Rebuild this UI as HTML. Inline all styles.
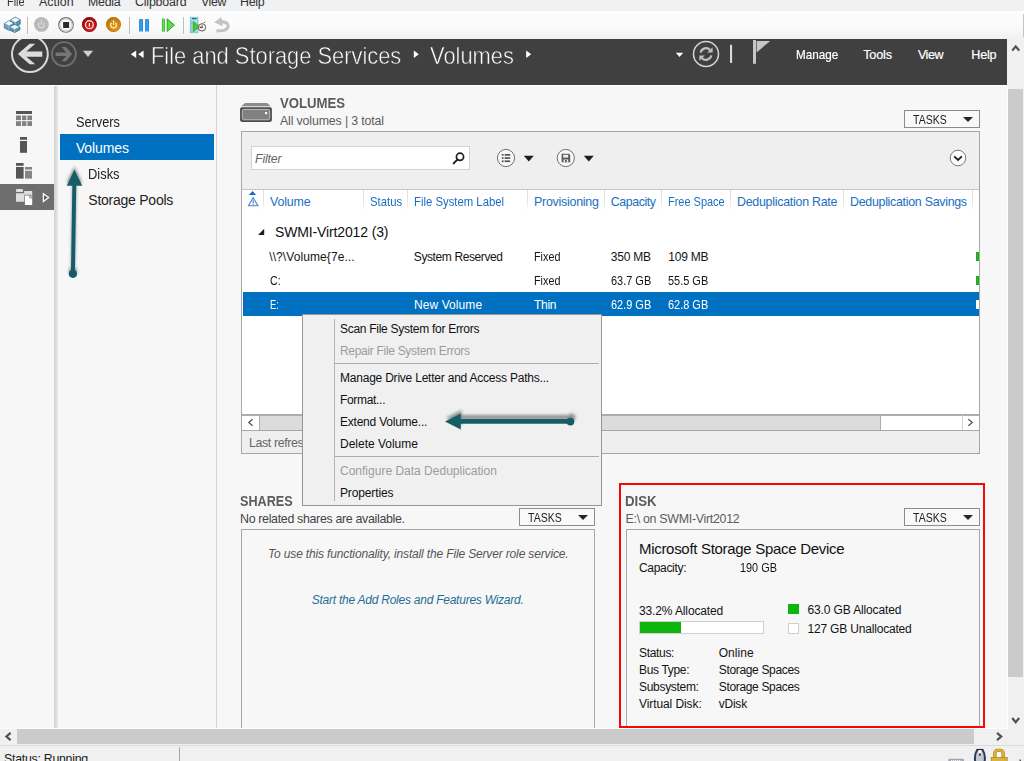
<!DOCTYPE html>
<html lang="en">
<head>
<meta charset="utf-8">
<title>Server Manager - File and Storage Services - Volumes</title>
<style>
*{box-sizing:border-box;margin:0;padding:0}
html,body{width:1024px;height:761px;overflow:hidden;background:#f7f7f7}
body{position:relative;font-family:"Liberation Sans",sans-serif;font-size:12px;color:#1a1a1a}
.a{position:absolute}
.t{position:absolute;white-space:nowrap;line-height:16px;height:16px;z-index:2}
svg{position:absolute;left:0;top:0;overflow:visible}
.tasks{border:1px solid #8c8c8c;background:#f9f9f9;height:18px;width:76px}
.tasks i{position:absolute;left:58px;top:6px;border:5px solid transparent;border-top:5px solid #262626;border-bottom:0;width:0;height:0}
.box{border:1px solid #a6a6a6}
.cs{position:absolute;top:190px;width:1px;height:21px;background:linear-gradient(#dcdcdc,#e8e8e8 60%,#fff)}
</style>
</head>
<body>
<!-- window chrome: menu, toolbar -->
<div class="a" style="left:0;top:0;width:1024px;height:11px;background:#f0f1f3"></div>
<div class="a" style="left:0;top:11px;width:1024px;height:28px;background:linear-gradient(#fdfdfd,#fafafa 60%,#f1f1f1)"></div>
<div class="a" style="left:1023px;top:14px;width:1px;height:23px;background:#c4c4c4"></div>
<!-- server manager header -->
<div class="a" style="left:0;top:39px;width:1007px;height:46px;background:#404040"></div>

<div class="a" style="left:0;top:85px;width:1007px;height:1px;background:#fdfdfd"></div>
<!-- left icon strip + nav -->
<div class="a" style="left:0;top:184px;width:54px;height:26px;background:#6e6e6e"></div>
<div class="a" style="left:54px;top:86px;width:4px;height:642px;background:linear-gradient(90deg,#d0d0d0,#dcdcdc 50%,#e8e8e8)"></div>
<div class="a" style="left:216px;top:85px;width:1px;height:644px;background:#d4d4d4"></div>
<div class="a" style="left:60px;top:134px;width:154px;height:26px;background:#0071c0"></div>

<!-- VOLUMES tile -->
<div class="a tasks" style="left:904px;top:110px"><i></i></div>
<div class="a box" style="left:241px;top:131px;width:739px;height:323px;background:#fff"></div>
<div class="a" style="left:242px;top:132px;width:737px;height:57px;background:#efefef"></div>
<div class="a" style="left:242px;top:189px;width:737px;height:1px;background:#c6c6c6"></div>
<div class="a" style="left:251px;top:146px;width:219px;height:24px;background:#fff;border:1px solid #d2d2d2"></div>
<div class="cs" style="left:263px"></div><div class="cs" style="left:363px"></div><div class="cs" style="left:407px"></div>
<div class="cs" style="left:527px"></div><div class="cs" style="left:604px"></div><div class="cs" style="left:661px"></div>
<div class="cs" style="left:730px"></div><div class="cs" style="left:843px"></div><div class="cs" style="left:972px"></div>
<!-- selected row -->
<div class="a" style="left:243px;top:292px;width:736px;height:24px;background:#0071c0"></div>
<div class="a" style="left:976px;top:252px;width:3px;height:9px;background:#22b022"></div>
<div class="a" style="left:976px;top:276px;width:3px;height:9px;background:#22b022"></div>
<div class="a" style="left:976px;top:300px;width:3px;height:9px;background:#fff"></div>
<!-- inner h-scrollbar + footer -->
<div class="a" style="left:242px;top:414px;width:737px;height:17px;background:#fff;border-top:2px solid #adadad;border-bottom:1px solid #a6a6a6"></div>
<div class="a" style="left:259px;top:416px;width:622px;height:14px;background:#dcdcdc;border-left:1px solid #ababab;border-right:1px solid #ababab"></div>
<div class="a" style="left:962px;top:415px;width:1px;height:15px;background:#d0d0d0"></div>
<div class="a" style="left:242px;top:431px;width:737px;height:22px;background:#efefef"></div>

<!-- SHARES tile -->
<div class="a tasks" style="left:519px;top:508px"><i></i></div>
<div class="a box" style="left:241px;top:529px;width:354px;height:200px;border-bottom:0"></div>

<!-- DISK tile -->
<div class="a tasks" style="left:904px;top:508px"><i></i></div>
<div class="a box" style="left:626px;top:529px;width:354px;height:198px;border-bottom:0"></div>
<div class="a" style="left:639px;top:621px;width:125px;height:13px;background:#fff;border:1px solid #d0d0d0"></div>
<div class="a" style="left:640px;top:622px;width:41px;height:11px;background:#0db50d"></div>
<div class="a" style="left:788px;top:604px;width:11px;height:10px;background:#0db50d"></div>
<div class="a" style="left:788px;top:623px;width:11px;height:11px;background:#fff;border:1px solid #cfcfcf"></div>
<div class="a" style="left:619px;top:483px;width:366px;height:245px;border:2px solid #f40808"></div>

<!-- context menu -->
<div class="a" style="left:302px;top:314px;width:300px;height:192px;background:#f0f0f0;border:1px solid #979797;z-index:4"></div>
<div class="a" style="left:334px;top:319px;width:1px;height:182px;background:#b4b4b4;z-index:4"></div>
<div class="a" style="left:335px;top:363px;width:264px;height:1px;background:#aaa;z-index:4"></div>
<div class="a" style="left:335px;top:456px;width:264px;height:1px;background:#aaa;z-index:4"></div>

<span class="t" style="left:151.10px;top:48.28px;font-size:24px;transform:scaleX(0.9108);transform-origin:0 0;color:#fff;-webkit-text-stroke:0.55px #404040;">File and Storage Services</span>
<span class="t" style="left:430.00px;top:48.28px;font-size:24px;transform:scaleX(0.9113);transform-origin:0 0;color:#fff;-webkit-text-stroke:0.55px #404040;">Volumes</span>
<span class="t" style="left:796.40px;top:46.63px;font-size:12.6px;transform:scaleX(0.9294);transform-origin:0 0;color:#fff;-webkit-text-stroke:0.2px #fff;">Manage</span>
<span class="t" style="left:863.20px;top:46.63px;font-size:12.6px;letter-spacing:-0.141px;color:#fff;-webkit-text-stroke:0.2px #fff;">Tools</span>
<span class="t" style="left:917.90px;top:46.63px;font-size:12.6px;letter-spacing:-0.445px;color:#fff;-webkit-text-stroke:0.2px #fff;">View</span>
<span class="t" style="left:971.30px;top:46.63px;font-size:12.6px;letter-spacing:-0.252px;color:#fff;-webkit-text-stroke:0.2px #fff;">Help</span>
<span class="t" style="left:75.90px;top:114.15px;font-size:14px;transform:scaleX(0.9122);transform-origin:0 0;color:#222;">Servers</span>
<span class="t" style="left:75.90px;top:140.15px;font-size:14px;letter-spacing:-0.086px;color:#fff;">Volumes</span>
<span class="t" style="left:88.30px;top:166.15px;font-size:14px;transform:scaleX(0.9230);transform-origin:0 0;color:#222;">Disks</span>
<span class="t" style="left:88.30px;top:192.15px;font-size:14px;letter-spacing:-0.243px;color:#222;">Storage Pools</span>
<span class="t" style="left:280.00px;top:95.45px;font-size:14px;transform:scaleX(0.9410);transform-origin:0 0;font-weight:bold;color:#5b5b5b;">VOLUMES</span>
<span class="t" style="left:280.00px;top:112.70px;font-size:12.4px;letter-spacing:-0.158px;color:#5c5c5c;">All volumes | 3 total</span>
<span class="t" style="left:912.75px;top:111.77px;font-size:12.2px;transform:scaleX(0.8614);transform-origin:0 0;color:#222;">TASKS</span>
<span class="t" style="left:255.00px;top:150.70px;font-size:12.4px;letter-spacing:-0.191px;font-style:italic;color:#666;">Filter</span>
<span class="t" style="left:270.00px;top:193.95px;font-size:12.4px;letter-spacing:-0.155px;color:#1b6ec2;">Volume</span>
<span class="t" style="left:370.00px;top:193.95px;font-size:12.4px;transform:scaleX(0.9149);transform-origin:0 0;color:#1b6ec2;">Status</span>
<span class="t" style="left:414.00px;top:193.95px;font-size:12.4px;transform:scaleX(0.9149);transform-origin:0 0;color:#1b6ec2;">File System Label</span>
<span class="t" style="left:534.00px;top:193.95px;font-size:12.4px;letter-spacing:-0.237px;color:#1b6ec2;">Provisioning</span>
<span class="t" style="left:610.75px;top:193.95px;font-size:12.4px;letter-spacing:-0.415px;color:#1b6ec2;">Capacity</span>
<span class="t" style="left:668.25px;top:193.95px;font-size:12.4px;transform:scaleX(0.8843);transform-origin:0 0;color:#1b6ec2;">Free Space</span>
<span class="t" style="left:737.00px;top:193.95px;font-size:12.4px;letter-spacing:-0.250px;color:#1b6ec2;">Deduplication Rate</span>
<span class="t" style="left:850.00px;top:193.95px;font-size:12.4px;letter-spacing:-0.277px;color:#1b6ec2;">Deduplication Savings</span>
<span class="t" style="left:275.00px;top:224.15px;font-size:14px;letter-spacing:-0.134px;color:#111;">SWMI-Virt2012 (3)</span>
<span class="t" style="left:269.25px;top:248.84px;font-size:12px;letter-spacing:0.084px;color:#141414;">\\?\Volume{7e...</span>
<span class="t" style="left:413.80px;top:248.84px;font-size:12px;letter-spacing:-0.394px;color:#141414;">System Reserved</span>
<span class="t" style="left:534.00px;top:248.84px;font-size:12px;transform:scaleX(0.8997);transform-origin:0 0;color:#141414;">Fixed</span>
<span class="t" style="left:610.70px;top:248.84px;font-size:12px;letter-spacing:-0.193px;color:#141414;">350 MB</span>
<span class="t" style="left:668.20px;top:248.84px;font-size:12px;letter-spacing:-0.193px;color:#141414;">109 MB</span>
<span class="t" style="left:269.80px;top:272.84px;font-size:12px;transform:scaleX(0.8833);transform-origin:0 0;color:#141414;">C:</span>
<span class="t" style="left:534.00px;top:272.84px;font-size:12px;transform:scaleX(0.8997);transform-origin:0 0;color:#141414;">Fixed</span>
<span class="t" style="left:610.70px;top:272.84px;font-size:12px;transform:scaleX(0.9130);transform-origin:0 0;color:#141414;">63.7 GB</span>
<span class="t" style="left:668.20px;top:272.84px;font-size:12px;transform:scaleX(0.9130);transform-origin:0 0;color:#141414;">55.5 GB</span>
<span class="t" style="left:270.00px;top:296.59px;font-size:12px;transform:scaleX(0.7846);transform-origin:0 0;color:#fff;">E:</span>
<span class="t" style="left:414.00px;top:296.59px;font-size:12px;letter-spacing:0.078px;color:#fff;">New Volume</span>
<span class="t" style="left:534.00px;top:296.59px;font-size:12px;letter-spacing:-0.286px;color:#fff;">Thin</span>
<span class="t" style="left:610.70px;top:296.59px;font-size:12px;transform:scaleX(0.9130);transform-origin:0 0;color:#fff;">62.9 GB</span>
<span class="t" style="left:668.20px;top:296.59px;font-size:12px;transform:scaleX(0.9130);transform-origin:0 0;color:#fff;">62.8 GB</span>
<span class="t" style="left:249.00px;top:435.00px;font-size:12.4px;letter-spacing:-0.377px;color:#666;">Last refres</span>
<span class="t" style="left:340.00px;top:321.09px;font-size:12px;letter-spacing:-0.280px;color:#111;z-index:5;">Scan File System for Errors</span>
<span class="t" style="left:340.00px;top:342.84px;font-size:12px;letter-spacing:-0.309px;color:#9c9c9c;z-index:5;">Repair File System Errors</span>
<span class="t" style="left:340.00px;top:369.59px;font-size:12px;letter-spacing:-0.219px;color:#111;z-index:5;">Manage Drive Letter and Access Paths...</span>
<span class="t" style="left:340.00px;top:391.59px;font-size:12px;letter-spacing:-0.318px;color:#111;z-index:5;">Format...</span>
<span class="t" style="left:340.00px;top:413.59px;font-size:12px;letter-spacing:-0.224px;color:#111;z-index:5;">Extend Volume...</span>
<span class="t" style="left:340.00px;top:435.59px;font-size:12px;letter-spacing:-0.011px;color:#111;z-index:5;">Delete Volume</span>
<span class="t" style="left:340.00px;top:462.84px;font-size:12px;letter-spacing:0.005px;color:#9c9c9c;z-index:5;">Configure Data Deduplication</span>
<span class="t" style="left:340.00px;top:484.84px;font-size:12px;letter-spacing:-0.130px;color:#111;z-index:5;">Properties</span>
<span class="t" style="left:240.00px;top:493.15px;font-size:14px;transform:scaleX(0.9022);transform-origin:0 0;font-weight:bold;color:#5b5b5b;">SHARES</span>
<span class="t" style="left:240.00px;top:510.70px;font-size:12.4px;letter-spacing:-0.322px;color:#444;">No related shares are available.</span>
<span class="t" style="left:527.75px;top:509.77px;font-size:12.2px;transform:scaleX(0.8614);transform-origin:0 0;color:#222;">TASKS</span>
<span class="t" style="left:268.00px;top:545.84px;font-size:12px;letter-spacing:-0.151px;font-style:italic;color:#555;">To use this functionality, install the File Server role service.</span>
<span class="t" style="left:311.75px;top:591.59px;font-size:12px;letter-spacing:-0.245px;font-style:italic;color:#1f6e96;">Start the Add Roles and Features Wizard.</span>
<span class="t" style="left:625.25px;top:493.15px;font-size:14px;transform:scaleX(0.9461);transform-origin:0 0;font-weight:bold;color:#5b5b5b;">DISK</span>
<span class="t" style="left:625.50px;top:510.95px;font-size:12.4px;letter-spacing:-0.285px;color:#5c5c5c;">E:\ on SWMI-Virt2012</span>
<span class="t" style="left:912.75px;top:509.77px;font-size:12.2px;transform:scaleX(0.8614);transform-origin:0 0;color:#222;">TASKS</span>
<span class="t" style="left:639.00px;top:540.55px;font-size:15px;letter-spacing:-0.302px;color:#111;">Microsoft Storage Space Device</span>
<span class="t" style="left:639.00px;top:559.84px;font-size:12px;letter-spacing:-0.320px;color:#141414;">Capacity:</span>
<span class="t" style="left:739.50px;top:559.84px;font-size:12px;transform:scaleX(0.9066);transform-origin:0 0;color:#141414;">190 GB</span>
<span class="t" style="left:639.00px;top:602.84px;font-size:12px;letter-spacing:-0.127px;color:#141414;">33.2% Allocated</span>
<span class="t" style="left:807.50px;top:601.84px;font-size:12px;letter-spacing:-0.134px;color:#141414;">63.0 GB Allocated</span>
<span class="t" style="left:807.50px;top:620.84px;font-size:12px;letter-spacing:-0.184px;color:#141414;">127 GB Unallocated</span>
<span class="t" style="left:639.00px;top:644.84px;font-size:12px;letter-spacing:-0.316px;color:#141414;">Status:</span>
<span class="t" style="left:718.75px;top:644.84px;font-size:12px;letter-spacing:0.035px;color:#141414;">Online</span>
<span class="t" style="left:639.00px;top:662.09px;font-size:12px;letter-spacing:-0.334px;color:#141414;">Bus Type:</span>
<span class="t" style="left:718.75px;top:662.09px;font-size:12px;letter-spacing:-0.339px;color:#141414;">Storage Spaces</span>
<span class="t" style="left:639.00px;top:679.09px;font-size:12px;letter-spacing:-0.305px;color:#141414;">Subsystem:</span>
<span class="t" style="left:718.75px;top:679.09px;font-size:12px;letter-spacing:-0.339px;color:#141414;">Storage Spaces</span>
<span class="t" style="left:639.00px;top:695.84px;font-size:12px;letter-spacing:-0.088px;color:#141414;">Virtual Disk:</span>
<span class="t" style="left:718.75px;top:695.84px;font-size:12px;letter-spacing:-0.239px;color:#141414;">vDisk</span>
<span class="t" style="left:4.00px;top:750.90px;font-size:12.4px;letter-spacing:-0.285px;color:#222;z-index:9;">Status: Running</span>
<span class="t" style="left:7.25px;top:-6.10px;font-size:12.4px;transform:scaleX(0.8839);transform-origin:0 0;color:#333;">File</span>
<span class="t" style="left:38.90px;top:-6.10px;font-size:12.4px;letter-spacing:0.052px;color:#333;">Action</span>
<span class="t" style="left:88.00px;top:-6.10px;font-size:12.4px;letter-spacing:-0.250px;color:#333;">Media</span>
<span class="t" style="left:135.00px;top:-6.10px;font-size:12.4px;letter-spacing:-0.183px;color:#333;">Clipboard</span>
<span class="t" style="left:201.00px;top:-6.10px;font-size:12.4px;letter-spacing:-0.435px;color:#333;">View</span>
<span class="t" style="left:240.00px;top:-6.10px;font-size:12.4px;letter-spacing:-0.271px;color:#333;">Help</span>

<!-- ICONS -->
<svg width="1024" height="761" viewBox="0 0 1024 761" style="z-index:3">
<defs>
<filter id="bl" x="-20%" y="-50%" width="140%" height="200%"><feGaussianBlur stdDeviation="1.6"/></filter>
<radialGradient id="gRed" cx="62%" cy="72%" r="75%"><stop offset="0" stop-color="#e42222"/><stop offset=".55" stop-color="#b81414"/><stop offset="1" stop-color="#920a0a"/></radialGradient>
<radialGradient id="gOr" cx="62%" cy="72%" r="75%"><stop offset="0" stop-color="#f29410"/><stop offset=".55" stop-color="#d2860e"/><stop offset="1" stop-color="#b87406"/></radialGradient>
<linearGradient id="gBlue" x1="0" x2="1"><stop offset="0" stop-color="#1b78cc"/><stop offset=".5" stop-color="#38aef4"/><stop offset="1" stop-color="#1b78cc"/></linearGradient>
<linearGradient id="gGreen" x1="0" x2="1"><stop offset="0" stop-color="#2fae22"/><stop offset=".5" stop-color="#6fe05a"/><stop offset="1" stop-color="#2fae22"/></linearGradient>
</defs>
<!-- ===== VM toolbar icons ===== -->
<g>
 <!-- ctrl-alt-del cubes -->
 <g stroke="#2f6480" stroke-width=".7" stroke-linejoin="round">
  <path d="M10.200 20.300l5-3.200 5 2.600v4.600l-5 3-5-2.400z" fill="#5b93ad"/>
  <path d="M4.300 23.600l4.600-2.900 4.800 2.500v4.300l-4.600 2.900-4.800-2.500z" fill="#6aa2bb"/>
  <path d="M9.400 27.200l5.200-2.800 5.300 2.600v2.900l-5.300 2.600-5.200-2.600z" fill="#5b93ad"/>
 </g>
 <path d="M10.900 20.200l4.400-2.700 4.200 2.200-4.400 2.600z" fill="#f4fafc"/>
 <path d="M4.900 23.500l4.100-2.500 4.100 2.100-4.100 2.500z" fill="#f4fafc"/>
 <path d="M10.200 27.100l4.500-2.300 4.500 2.200-4.500 2.300z" fill="#eaf4f8"/>
 <path d="M9 25.700v4.200M14.700 29.400v2.700M15.200 22.400v2" stroke="#a9d2e0" stroke-width=".9"/>
 <rect x="27" y="17" width="1" height="17" fill="#bdbdbd"/>
 <!-- power (disabled) -->
 <circle cx="41.400" cy="24.400" r="7.400" fill="#b9b9b9"/>
 <path d="M39.500 22.600a2.900 2.900 0 1 0 3.800 0" fill="none" stroke="#d9d9d9" stroke-width="1.300"/><rect x="40.750" y="20.200" width="1.300" height="4.600" fill="#d9d9d9"/>
 <!-- stop -->
 <circle cx="66" cy="24.900" r="7.300" fill="#fafafa" stroke="#6e6e6e" stroke-width="1.100"/>
 <circle cx="66" cy="24.900" r="6.100" fill="none" stroke="#cfcfcf" stroke-width="1.300"/>
 <rect x="63.100" y="22" width="6" height="6" fill="#2b2b2b"/>
 <!-- shut down red -->
 <circle cx="89.400" cy="24.500" r="7.400" fill="url(#gRed)"/>
 <circle cx="89.400" cy="24.500" r="7" fill="none" stroke="#8c0a0a" stroke-width=".8" opacity=".7"/>
 <circle cx="89.400" cy="24.700" r="3.900" fill="none" stroke="#f3d6d2" stroke-width="1.400"/><rect x="88.800" y="23" width="1.200" height="3.500" fill="#fff"/>
 <!-- save orange -->
 <circle cx="113.500" cy="24.500" r="7.400" fill="url(#gOr)"/>
 <circle cx="113.500" cy="24.500" r="7" fill="none" stroke="#b06c04" stroke-width=".8" opacity=".7"/>
 <path d="M111.600 22.700a2.900 2.900 0 1 0 3.800 0" fill="none" stroke="#fbe8c4" stroke-width="1.400"/><rect x="112.850" y="20.200" width="1.300" height="4.700" fill="#fbe8c4"/>
 <rect x="129" y="17" width="1" height="17" fill="#bdbdbd"/>
 <!-- pause -->
 <rect x="139.100" y="19" width="3.900" height="12.600" rx=".7" fill="url(#gBlue)"/>
 <rect x="145.100" y="19" width="3.900" height="12.600" rx=".7" fill="url(#gBlue)"/>
 <!-- reset / play -->
 <rect x="161.900" y="18.400" width="3.100" height="13.400" rx=".6" fill="url(#gGreen)"/>
 <path d="M167.200 18.800l7.200 6.300-7.200 6.300z" fill="#62d84e" stroke="#2da320" stroke-width="1" stroke-linejoin="round"/>
 <rect x="183" y="17" width="1" height="17" fill="#bdbdbd"/>
 <!-- checkpoint -->
 <rect x="190.200" y="17.200" width="7.800" height="15.600" fill="#a9dde8" stroke="#5fb3c6" stroke-width=".6"/>
 <rect x="192" y="18" width="4.600" height="1.200" fill="#2f6e7e"/>
 <path d="M191.200 21v11" stroke="#5fb3c6" stroke-width=".9" stroke-dasharray="1 1"/>
 <path d="M193.200 21.400l6.400 5.200-6.400 5.200z" fill="#48c838" stroke="#2a9a1e" stroke-width=".7" stroke-linejoin="round"/>
 <circle cx="202" cy="27.400" r="3.700" fill="#f4f4f4" stroke="#4a4a4a" stroke-width=".9"/>
 <path d="M199.600 27.400h3.400" stroke="#d02020" stroke-width="1.300"/><path d="M202 25.200v2.200" stroke="#2a9a1e" stroke-width="1"/>
 <path d="M203.600 23.200l1.600-1.200" stroke="#4a4a4a" stroke-width=".9"/>
 <!-- revert -->
 <path d="M221 21.900C228.600 21.200 231.200 28.600 223.400 30.500L216.400 30.900" fill="none" stroke="#c3c3c3" stroke-width="3.100"/>
 <path d="M214.200 22.200l7.200-5.200 1.400 9.600z" fill="#c3c3c3"/>
</g>
<!-- ===== header glyphs ===== -->
<g>
 <clipPath id="hc"><rect x="0" y="39" width="1007" height="46"/></clipPath>
 <g clip-path="url(#hc)">
  <circle cx="29.900" cy="54.050" r="17.900" fill="none" stroke="#d8d8d8" stroke-width="2"/>
  <path d="M17.900 54L29.600 43.800H35.300L26.350 51.600H42.300V56.700H26.350L35.300 64.300H29.600Z" fill="#dcdcdc"/>
  <circle cx="63.900" cy="54.050" r="11.950" fill="none" stroke="#707070" stroke-width="1.800"/>
  <path d="M72.100 54.100L66 46.900H61.600L66.260 52.400H55.600V56H66.260L61.600 61.300H66Z" fill="#757575"/>
  <path d="M82.900 50.800h10.200l-5.100 6.200z" fill="#d0d0d0"/>
  <path d="M136.2 50.6v7.4l-5.4-3.7zM143.6 50.6v7.4l-5.4-3.7z" fill="#fff"/>
  <path d="M413.8 50.4v7.6l5-3.8zM526.2 50.4v7.6l5-3.8z" fill="#fff"/>
  <path d="M675.8 52.8h7.4l-3.7 4.3z" fill="#fff"/>
  <circle cx="706" cy="54" r="12.5" fill="none" stroke="#d6d6d6" stroke-width="1.5"/>
  <path d="M700.6 52.6a5.6 5.6 0 0 1 9.6-2.6" fill="none" stroke="#c0c0c0" stroke-width="2.1"/>
  <path d="M711.4 55.4a5.6 5.6 0 0 1-9.6 2.6" fill="none" stroke="#c0c0c0" stroke-width="2.1"/>
  <path d="M712.6 47.2v5.4h-5.4z" fill="#c0c0c0"/><path d="M699.4 60.8v-5.4h5.4z" fill="#c0c0c0"/>
  <rect x="730" y="44.8" width="2.1" height="18.1" fill="#dadada"/>
  <rect x="753" y="40" width="3" height="23.8" fill="#c6c6c6"/>
  <path d="M756.6 41h13.6l-13.6 11.4z" fill="#c6c6c6"/>
 </g>
</g>
<!-- ===== left strip icons ===== -->
<g>
 <rect x="16" y="111" width="16" height="3" fill="#555"/>
 <g fill="#828282"><rect x="16" y="115.5" width="5" height="4.6"/><rect x="22" y="115.5" width="4.4" height="4.6"/><rect x="27.4" y="115.5" width="4.6" height="4.6"/>
 <rect x="16" y="121.2" width="5" height="4.8"/><rect x="22" y="121.2" width="4.4" height="4.8"/><rect x="27.4" y="121.2" width="4.6" height="4.8"/></g>
 <rect x="20" y="137" width="7" height="2.8" fill="#555"/><rect x="20" y="141" width="7" height="11.8" fill="#555"/>
 <rect x="16" y="163" width="7.6" height="2.8" fill="#555"/><rect x="16" y="167" width="7.6" height="11.6" fill="#555"/>
 <rect x="25" y="167" width="7" height="2.6" fill="#858585"/><rect x="25" y="170.8" width="7" height="7.8" fill="#858585"/>
 <!-- files icon (selected) -->
 <rect x="16" y="189" width="7" height="3" rx=".8" fill="#dedede"/>
 <path d="M16 193.200h8.200v-2.200h8v10.700h-16.200z" fill="#dedede"/>
 <path d="M24.300 194.800h6.300l2.200 2.200v8.700h-8.500z" fill="#6e6e6e"/>
 <path d="M24.900 195.400h5.200l2.100 2.100v7.600h-7.300z" fill="#fff"/>
 <path d="M29.800 195.600v2.400h2.400" fill="none" stroke="#6e6e6e" stroke-width=".8"/>
 <path d="M43.400 193.700l5.200 3.900-5.200 3.900z" fill="#5c5c5c" stroke="#fff" stroke-width="1.300" stroke-linejoin="miter"/>
</g>
<!-- ===== tile icons ===== -->
<g>
 <!-- volumes disk -->
 <path d="M245 102.900h22.200l3.200 3.100h-28.800z" fill="#8c8c8c"/>
 <rect x="241.600" y="106" width="28.800" height=".9" fill="#d2d2d2"/>
 <rect x="240.100" y="107.200" width="31.800" height="14.700" rx="1.800" fill="#4a4a4a"/>
 <rect x="242.300" y="109.400" width="27.400" height="10.400" rx="1.300" fill="#818181" stroke="#cacaca" stroke-width=".9"/>
 <rect x="265" y="112" width="2.200" height="2.200" fill="#fff"/>
 <!-- magnifier -->
 <circle cx="460" cy="156.800" r="3.600" fill="none" stroke="#1e1e1e" stroke-width="1.700"/>
 <path d="M457.400 159.600l-3.800 3.800" stroke="#1e1e1e" stroke-width="2" stroke-linecap="round"/>
 <!-- list options -->
 <circle cx="506" cy="158" r="8.600" fill="#f8f8f8" stroke="#707070" stroke-width="1"/>
 <g fill="#555"><rect x="501.800" y="154" width="1.800" height="1.700"/><rect x="504.600" y="154" width="5.600" height="1.700"/>
 <rect x="501.800" y="157.200" width="1.800" height="1.700"/><rect x="504.600" y="157.200" width="5.600" height="1.700"/>
 <rect x="501.800" y="160.400" width="1.800" height="1.700"/><rect x="504.600" y="160.400" width="5.600" height="1.700"/></g>
 <path d="M523.800 155.800h10l-5 5.600z" fill="#1e1e1e"/>
 <!-- save query -->
 <circle cx="565.800" cy="158" r="8.600" fill="#f8f8f8" stroke="#707070" stroke-width="1"/>
 <path d="M561.600 153.800h7.400l1.200 1.200v7.200h-8.600z" fill="#5a5a5a"/>
 <rect x="563.200" y="154.800" width="5" height="2.800" fill="#f0f0f0"/><rect x="563.600" y="159.400" width="4.600" height="2.800" fill="#f0f0f0"/><rect x="565" y="159.800" width="1.800" height="2.400" fill="#5a5a5a"/>
 <path d="M583.800 155.800h10l-5 5.600z" fill="#1e1e1e"/>
 <!-- expand chevron -->
 <circle cx="958" cy="158" r="7.800" fill="#fdfdfd" stroke="#7a7a7a" stroke-width="1"/>
 <path d="M954.200 156.400l3.800 3.600 3.800-3.600" fill="none" stroke="#1e1e1e" stroke-width="1.900"/>
 <!-- sort / status header glyph -->
 <path d="M248.900 195l3.600-4 3.600 4z" fill="#0f6cc0"/>
 <path d="M253.200 197.700l4.700 8h-9.400z" fill="none" stroke="#4d86c8" stroke-width="1.100"/>
 <rect x="252.650" y="200.300" width="1.100" height="3" fill="#3f7cc4"/><rect x="252.650" y="203.900" width="1.100" height="1.100" fill="#3f7cc4"/>
 <!-- group collapse -->
 <path d="M264.200 228.800v6.200h-6.200z" fill="#1e1e1e"/>
 <!-- inner scroll arrows -->
 <path d="M252.600 419.200l-3.800 3.300 3.800 3.300" fill="none" stroke="#555" stroke-width="1.300"/>
 <path d="M968.400 419.200l3.800 3.300-3.800 3.300" fill="none" stroke="#555" stroke-width="1.300"/>
</g>
</svg>


<!-- outer scrollbars + status bar -->
<div class="a" style="left:1007px;top:39px;width:17px;height:690px;background:#f0f0f0;z-index:7"></div>
<div class="a" style="left:1007px;top:85px;width:1px;height:644px;background:#fcfcfc;z-index:7"></div>
<div class="a" style="left:1008px;top:89px;width:15px;height:588px;background:#cbcbcb;z-index:7"></div>
<div class="a" style="left:0;top:728px;width:1007px;height:1px;background:#fdfdfd;z-index:7"></div>
<div class="a" style="left:0;top:729px;width:1024px;height:16px;background:#f0f0f0;z-index:7"></div>
<div class="a" style="left:17px;top:729px;width:957px;height:15px;background:#cbcbcb;z-index:7"></div>
<div class="a" style="left:0;top:745px;width:1024px;height:16px;background:#f0f0f0;border-top:1px solid #dcdcdc;z-index:7"></div>
<div class="a" style="left:179px;top:747px;width:1px;height:14px;background:#a8a8a8;z-index:8"></div>
<svg width="1024" height="761" viewBox="0 0 1024 761" style="z-index:9">
<defs><filter id="bl2" x="-30%" y="-60%" width="160%" height="220%"><feGaussianBlur stdDeviation="1.7"/></filter></defs>
<!-- outer scroll arrows -->
<path d="M1012.200 50.600l3.500-4.200 3.500 4.200" fill="none" stroke="#505050" stroke-width="2.200"/>
<path d="M1012.200 718l3.500 4.200 3.500-4.200" fill="none" stroke="#505050" stroke-width="2.200"/>
<path d="M10.600 732.800l-4.200 3.700 4.200 3.700" fill="none" stroke="#505050" stroke-width="2.200"/>
<path d="M997 732.800l4.200 3.700-4.200 3.700" fill="none" stroke="#505050" stroke-width="2.200"/>
<!-- status icons -->
<rect x="948.300" y="758.700" width="15.600" height="4" rx="1.300" fill="#a3a3b1"/>
<path d="M951 760.500h10.400" stroke="#eeeef2" stroke-width="1" stroke-dasharray="1.300 .700"/>
<path d="M974.400 762c-.9-5.400.2-10 2-12.600h6.800c1.900 2.600 3 7.200 2.100 12.600z" fill="#c3c8d1"/>
<path d="M975.300 762c-1-5.400.3-9.800 2-12.300" fill="none" stroke="#2c3b52" stroke-width="2"/>
<path d="M984.500 762c1-5.400-.3-9.800-2-12.300" fill="none" stroke="#2c3b52" stroke-width="2"/>
<path d="M976.600 749.600h6.600" stroke="#1e2a3c" stroke-width="1.400"/>
<rect x="978.500" y="750.200" width="2.800" height="3.200" fill="#fff"/>
<rect x="979.200" y="753.400" width="1.500" height="2.400" fill="#1f2836"/>
<path d="M994.900 757.600v-4.400a2.800 2.800 0 0 1 2.800-2.800h2.600a2.800 2.800 0 0 1 2.800 2.800v4.400" fill="#fbfbfb" stroke="#a98312" stroke-width="3.400"/>
<path d="M994.900 757.600v-4.400a2.800 2.800 0 0 1 2.800-2.800h2.600a2.800 2.800 0 0 1 2.800 2.800v4.400" fill="none" stroke="#dcb13c" stroke-width="2.100"/>
<rect x="991.200" y="757.400" width="16" height="5" fill="#dcb13c" stroke="#b08a18" stroke-width=".8"/>
<rect x="1019.500" y="759.500" width="1.500" height="2" fill="#555"/>
<!-- annotation arrows -->
<g>
 <g filter="url(#bl2)" opacity=".55" fill="#444" stroke="#444">
  <path d="M446 417.800l15.600-7.800v15.600z" stroke="none"/><path d="M460 417.400H571.400" stroke-width="4.600" fill="none"/><circle cx="571.400" cy="417.600" r="4.200" stroke="none"/>
 </g>
 <path d="M445 421.600l15.800-8v16z" fill="#155e68"/><path d="M460 421.400H570" stroke="#155e68" stroke-width="4.600" fill="none"/><circle cx="570.400" cy="421.600" r="3.900" fill="#155e68"/>
</g>
<g>
 <g filter="url(#bl2)" opacity=".55" fill="#444" stroke="#444">
  <path d="M74.400 166.600l-7.900 16.200h15.800z" stroke="none"/><path d="M74.400 181L72.900 271" stroke-width="4" fill="none"/><circle cx="72.900" cy="271" r="4.100" stroke="none"/>
 </g>
 <path d="M74.400 169.800l-7.700 16h15.600z" fill="#155e68"/><path d="M74.300 184L72.900 273.600" stroke="#155e68" stroke-width="3.900" fill="none"/><circle cx="72.900" cy="273.800" r="4.100" fill="#155e68"/>
</g>
</svg>

</body>
</html>
